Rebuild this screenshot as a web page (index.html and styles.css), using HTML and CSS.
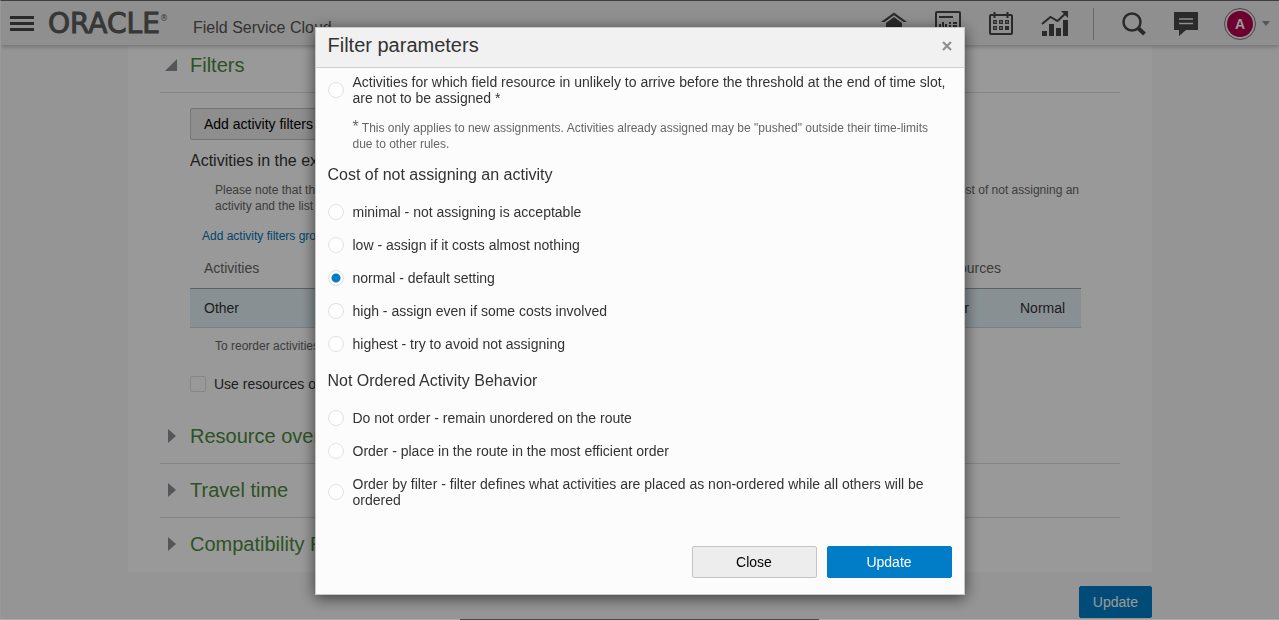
FILE: index.html
```
<!DOCTYPE html>
<html lang="en">
<head>
  <meta charset="UTF-8">
  <title>Field Service Cloud</title>
  <meta name="viewport" content="width=device-width, initial-scale=1.0">
  <link rel="stylesheet" href="styles.css">
</head>
<body>
  <header class="topbar">
    <button class="icon-btn menu-btn" type="button" aria-label="Menu">
      <svg width="24" height="15" viewBox="0 0 24 15"><path d="M0 1.5h24M0 7.5h24M0 13.5h24" stroke="#464646" stroke-width="3"/></svg>
    </button>
    <span class="logo">ORACLE<sup>®</sup></span>
    <span class="product">Field Service Cloud</span>
    <nav class="nav">
      <a href="#" aria-label="Home">
        <svg width="26" height="26" viewBox="0 0 26 26" fill="#464646"><path d="M13 1.5 0 11h3.5L13 4.2 22.500 11H26z"/><path d="M13 6 5 12v12h6v-7h4v7h6V12z"/></svg>
      </a>
      <a href="#" aria-label="Reports">
        <svg width="26" height="26" viewBox="0 0 26 26"><rect x="1" y="1" width="24" height="23" rx="1" fill="none" stroke="#464646" stroke-width="2"/><path d="M4 6h14M14 12h2m2 0h4M14 15h2m2 0h4" stroke="#464646" stroke-width="2"/><path d="M5 13v6M8 11v8M11 13v6" stroke="#464646" stroke-width="2"/></svg>
      </a>
      <a href="#" aria-label="Calendar">
        <svg width="24" height="24" viewBox="0 0 24 24" fill="none" stroke="#464646"><rect x="1" y="3" width="22" height="19" rx="1" stroke-width="2"/><path d="M5.500 0v6M18.500 0v6" stroke-width="2"/><path d="M4.700 8.700h2.600v2.600H4.700zM10.700 8.700h2.600v2.600h-2.600zM16.700 8.700h2.600v2.600h-2.600zM4.700 14.700h2.600v2.600H4.700zM10.700 14.700h2.600v2.600h-2.600z" stroke-width="1.300"/><path d="M16 14h4v4h-4z" fill="#464646" stroke="none"/></svg>
      </a>
      <a href="#" aria-label="Analytics">
        <svg width="28" height="26" viewBox="0 0 28 26" fill="#464646"><path d="M1 20h5v5H1zM8 13h5v12H8zM15 17h5v8h-5zM22 9h5v16h-5z"/><path d="m1 13 8.500-7 7 4L25 2" fill="none" stroke="#464646" stroke-width="2"/><path d="M20 0h7v7z"/></svg>
      </a>
      <span class="divider"></span>
      <a href="#" aria-label="Search">
        <svg width="24" height="24" viewBox="0 0 24 24" fill="none" stroke="#464646"><circle cx="10" cy="10" r="8.500" stroke-width="2.500"/><path d="m16 16 6.500 6" stroke-width="4"/></svg>
      </a>
      <a href="#" aria-label="Messages">
        <svg width="24" height="24" viewBox="0 0 24 24"><path d="M0 0h24v18H12l-7 6v-6H0z" fill="#464646"/><path d="M5 7h14M5 11.500h14" stroke="#eee" stroke-width="1.500"/></svg>
      </a>
      <button class="icon-btn user-btn" type="button" aria-label="User menu">
        <span class="avatar">A</span>
        <svg width="8" height="5" viewBox="0 0 8 5"><path d="M0 0h8L4 5z" fill="#8d9094"/></svg>
      </button>
    </nav>
  </header>

  <main class="page">
    <div class="card">
      <section>
        <h2 class="section-title open"><svg class="arrow" width="12" height="12" viewBox="0 0 12 12"><path d="M12 0v12H0z"/></svg>Filters</h2>
        <div class="section-body">
          <button class="btn add-btn" type="button">Add activity filters</button>
          <h3 class="subtitle">Activities in the exact order</h3>
          <div class="hint note">
            <div class="note-line"><span>Please note that the</span><span>cost of not assigning an</span></div>
            <div>activity and the list of</div>
          </div>
          <a class="add-link" href="#">Add activity filters group</a>
          <table class="groups">
            <thead>
              <tr><th>Activities</th><th class="col-res">Resources</th><th class="col-cost"></th></tr>
            </thead>
            <tbody>
              <tr><td>Other</td><td>Other</td><td>Normal</td></tr>
            </tbody>
          </table>
          <p class="hint reorder">To reorder activities</p>
          <label class="check"><input type="checkbox">Use resources of</label>
        </div>
      </section>
      <h2 class="section-title"><svg class="arrow" width="8" height="14" viewBox="0 0 8 14"><path d="M0 0l8 7-8 7z"/></svg>Resource overrides</h2>
      <h2 class="section-title"><svg class="arrow" width="8" height="14" viewBox="0 0 8 14"><path d="M0 0l8 7-8 7z"/></svg>Travel time</h2>
      <h2 class="section-title"><svg class="arrow" width="8" height="14" viewBox="0 0 8 14"><path d="M0 0l8 7-8 7z"/></svg>Compatibility Rules</h2>
    </div>
    <div class="page-actions">
      <button class="btn primary" type="button">Update</button>
    </div>
  </main>

  <div class="overlay">
    <form class="modal" role="dialog" aria-labelledby="modal-title">
      <div class="modal-head">
        <h1 id="modal-title">Filter parameters</h1>
        <button class="icon-btn close-btn" type="button" aria-label="Close dialog">
          <svg width="10" height="10" viewBox="0 0 10 10"><path d="m1 1 8 8M9 1 1 9" stroke="#8d9094" stroke-width="2.200"/></svg>
        </button>
      </div>
      <div class="modal-body">
        <label class="option"><input type="radio" name="late"><span>Activities for which field resource in unlikely to arrive before the threshold at the end of time slot, are not to be assigned *</span></label>
        <p class="hint footnote"><span class="star">*</span> This only applies to new assignments. Activities already assigned may be "pushed" outside their time-limits due to other rules.</p>

        <fieldset>
          <legend>Cost of not assigning an activity</legend>
          <label class="option"><input type="radio" name="cost"><span>minimal - not assigning is acceptable</span></label>
          <label class="option"><input type="radio" name="cost"><span>low - assign if it costs almost nothing</span></label>
          <label class="option"><input type="radio" name="cost" checked><span>normal - default setting</span></label>
          <label class="option"><input type="radio" name="cost"><span>high - assign even if some costs involved</span></label>
          <label class="option"><input type="radio" name="cost"><span>highest - try to avoid not assigning</span></label>
        </fieldset>

        <fieldset>
          <legend>Not Ordered Activity Behavior</legend>
          <label class="option"><input type="radio" name="behavior"><span>Do not order - remain unordered on the route</span></label>
          <label class="option"><input type="radio" name="behavior"><span>Order - place in the route in the most efficient order</span></label>
          <label class="option"><input type="radio" name="behavior"><span>Order by filter - filter defines what activities are placed as non-ordered while all others will be ordered</span></label>
        </fieldset>
      </div>
      <div class="modal-foot">
        <button class="btn" type="button">Close</button>
        <button class="btn primary" type="submit">Update</button>
      </div>
    </form>
  </div>
  <div class="bottom-edge"></div>
</body>
</html>
```
FILE: styles.css
```
* {
  box-sizing: border-box;
}

body {
  margin: 0;
  min-height: 100vh;
  overflow: hidden;
  font-family: "Liberation Sans", Arial, sans-serif;
  font-size: 14px;
  line-height: 16px;
  color: #333;
  background: #f8f8f8;
  border-top: 1px solid #6a6a6c;
  border-left: 1px solid #fff;
}

h1, h2, h3, p {
  margin: 0;
  font-weight: normal;
}

svg {
  display: block;
}

/* top bar */
.topbar {
  position: relative;
  display: flex;
  align-items: center;
  height: 44px;
  padding: 1px 9px 0;
  background: #eee;
  box-shadow: 0 1px 5px rgba(0, 0, 0, 0.3);
}

.icon-btn {
  padding: 0;
  border: none;
  background: none;
  cursor: pointer;
}

.logo {
  width: 145px;
  margin-left: 14px;
  font-family: "DejaVu Sans", Verdana, sans-serif;
  font-size: 28px;
  line-height: 40px;
  color: #5c5c5c;
  -webkit-text-stroke: 1px #5c5c5c;
}

.logo sup {
  font-size: 8px;
  line-height: 8px;
  vertical-align: 12px;
  -webkit-text-stroke: 0;
}

.product {
  padding-top: 8px;
  font-size: 16px;
  color: #555;
}

.nav {
  display: flex;
  align-items: center;
  gap: 28px;
  margin-left: auto;
}

.divider {
  width: 1px;
  height: 32px;
  margin: 0 0 0 -4px;
  background: #aaa;
}

.user-btn {
  display: flex;
  align-items: center;
  gap: 6px;
  margin-left: -2px;
}

.avatar {
  width: 32px;
  height: 32px;
  padding: 2px;
  border: 1px solid #777;
  border-radius: 50%;
  background: #b8004f content-box;
  font-family: "Liberation Sans", Arial, sans-serif;
  font-size: 14px;
  font-weight: bold;
  line-height: 26px;
  color: #fff;
}

/* page */
.page {
  max-width: 1024px;
  margin: 0 auto;
}

.card {
  padding: 1px 32px 0;
  background: #fff;
}

.section-title {
  display: flex;
  align-items: center;
  height: 54px;
  padding-bottom: 2px;
  border-bottom: 1px solid #dcdcdc;
  font-size: 20px;
  color: #4a8a3a;
}

.section-title:last-child {
  border-bottom: none;
}

.section-title.open {
  height: 47px;
  padding-bottom: 8px;
}

.arrow {
  margin: 0 14px 0 8px;
  fill: #8d9094;
}

.open .arrow {
  margin: 0 13px 0 5px;
}

.section-body {
  padding: 15px 39px 18px 30px;
}

.btn {
  height: 32px;
  padding: 0 13px;
  border: 1px solid #c4c4c4;
  border-radius: 2px;
  background: #ededed;
  font-family: inherit;
  font-size: 14px;
  color: #000;
  cursor: pointer;
}

.btn.primary {
  border-color: #007dc6;
  background: #007dc6;
  color: #fff;
}

.subtitle {
  margin-top: 11px;
  font-size: 16px;
  line-height: 20px;
}

.hint {
  font-size: 12px;
  color: #666;
}

.note {
  margin-top: 11px;
  padding: 0 2px 0 25px;
}

.note-line {
  display: flex;
  justify-content: space-between;
}

.add-link {
  display: block;
  margin: 14px 12px 0;
  font-size: 12px;
  color: #0073b5;
  text-decoration: none;
}

.groups {
  width: 100%;
  margin-top: 4px;
  border-collapse: separate;
  border-spacing: 0;
}

.groups th,
.groups td {
  height: 40px;
  padding: 0 14px;
  text-align: left;
}

.groups th {
  font-weight: normal;
  color: #666;
}

.groups td {
  border-top: 1px solid #9b9fa3;
  border-bottom: 1px solid #c8d4da;
  background: #e3f1f7;
}

.groups .col-res {
  width: 86px;
  padding-right: 0;
}

.groups .col-cost {
  width: 75px;
}

.reorder {
  margin-top: 10px;
  padding-left: 25px;
}

.check {
  display: flex;
  align-items: center;
  gap: 8px;
  margin-top: 22px;
}

.check input {
  appearance: none;
  width: 16px;
  height: 16px;
  margin: 0;
  border: 1px solid #dfe0e1;
  border-radius: 2px;
  background: #fff;
}

.page-actions {
  display: flex;
  justify-content: flex-end;
  padding: 14px 0 1px;
}

/* dialog */
.overlay {
  position: fixed;
  inset: 0;
  display: flex;
  justify-content: center;
  align-items: flex-start;
  padding-top: 27px;
  background: rgba(0, 0, 0, 0.4);
}

.modal {
  width: 650px;
  max-width: 100%;
  border: 1px solid #c8c8c8;
  background: #fcfcfc;
  box-shadow: 0 3px 14px rgba(0, 0, 0, 0.6);
}

.modal-head {
  display: flex;
  justify-content: space-between;
  align-items: center;
  height: 40px;
  padding: 0 12px;
  border-bottom: 1px solid #d0d0d0;
  background: #f1f1f1;
}

.modal-head h1 {
  padding-bottom: 6px;
  font-size: 20px;
  line-height: 24px;
}

.close-btn {
  padding-bottom: 4px;
}

.modal-body {
  padding: 6px 12px 0;
}

.option {
  display: flex;
  align-items: center;
  gap: 9px;
}

.option + .option {
  margin-top: 17px;
}

.option input {
  flex: none;
  appearance: none;
  width: 16px;
  height: 16px;
  margin: 0;
  border: 1px solid #dfe0e1;
  border-radius: 50%;
  background: #fff;
}

.option input:checked {
  background: radial-gradient(circle, #007dc6 4px, #fff 5px);
}

.footnote {
  margin-top: 14px;
  padding: 0 12px 0 25px;
}

.star {
  font-size: 16px;
  line-height: 0;
}

fieldset {
  min-width: 0;
  margin: 19px 0 0;
  padding: 0;
  border: none;
}

legend {
  margin-bottom: 19px;
  padding: 0;
  font-size: 16px;
  line-height: 20px;
}

.footnote + fieldset {
  margin-top: 13px;
}

.modal-foot {
  display: flex;
  justify-content: flex-end;
  gap: 10px;
  padding: 38px 12px 16px;
}

.modal-foot .btn {
  width: 125px;
}

/* window edge along the bottom */
.bottom-edge {
  position: fixed;
  right: 0;
  bottom: 0;
  left: 0;
  height: 1px;
  background: linear-gradient(90deg, #aaa 36%, #4a4547 36%, #4a4547 64%, #aaa 64%);
}
```
